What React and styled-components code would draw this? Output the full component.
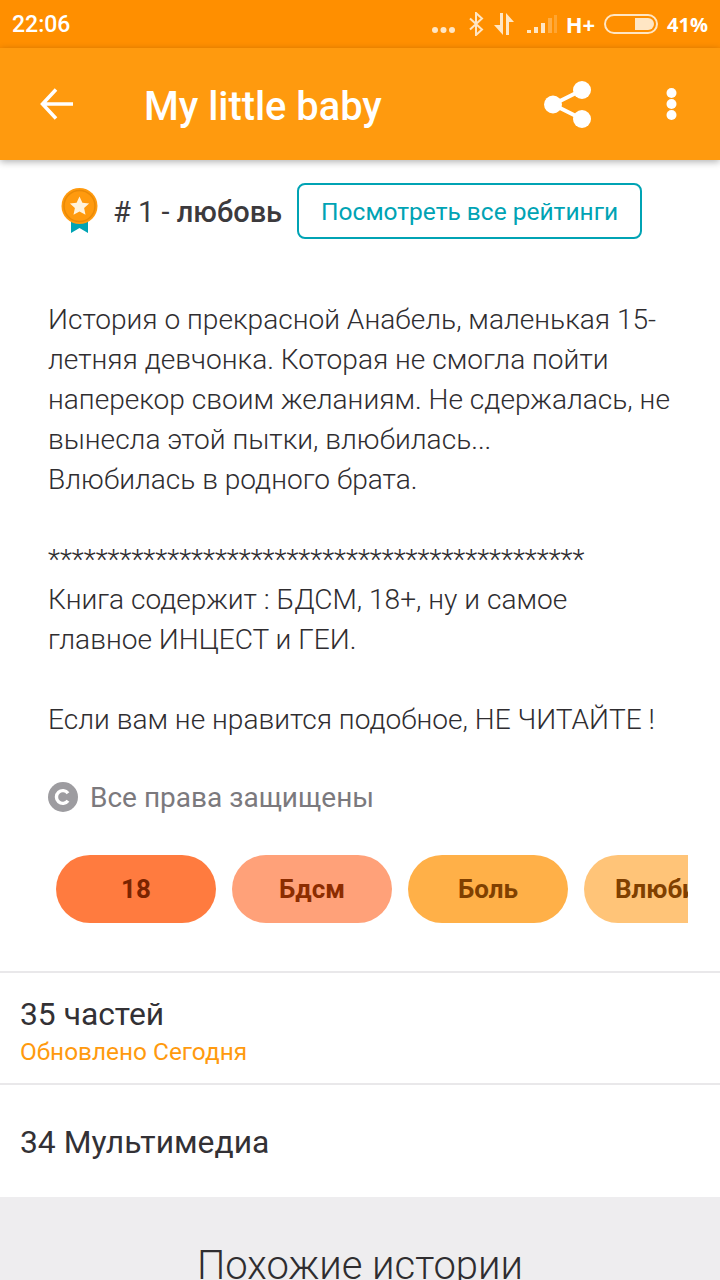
import React from "react";
import styled, { createGlobalStyle } from "styled-components";

const Global = createGlobalStyle`
  html, body { margin: 0; padding: 0; background: #fff; }
  body { font-family: Roboto, "Noto Sans", sans-serif; overflow: hidden; }
`;

const Page = styled.div`
  width: 720px;
  height: 1280px;
  overflow: hidden;
  background: #fff;
`;

const StatusBar = styled.div`
  height: 48px;
  background: #ff8f00;
  display: flex;
  align-items: center;
  padding: 0 12px;
  color: #fff;
`;

const Clock = styled.span`
  font-size: 23px;
  font-weight: 500;
  flex: 1;
`;

const StatusIcons = styled.div`
  display: flex;
  align-items: center;
  gap: 9px;
  color: #ffe6c4;
`;

const IconSlot = styled.span`
  display: flex;
  margin: ${(p) => p.$top || 0}px ${(p) => p.$right || 0}px 0 0;
`;

const NetworkType = styled.span`
  font-size: 22px;
  font-weight: 700;
  color: #fff;
  font-family: "Open Sans", sans-serif;
`;

const Battery = styled.span`
  font-size: 20px;
  font-weight: 700;
  color: #fff;
  font-family: "Open Sans", sans-serif;
`;

const Toolbar = styled.header`
  height: 112px;
  background: #ff9a0e;
  display: flex;
  align-items: center;
  box-shadow: 0 2px 7px rgba(0, 0, 0, 0.3);
  position: relative;
  padding-left: 40px;
  color: #fff;
`;

const Title = styled.h1`
  font-size: 39.8px;
  font-weight: 500;
  margin: 5px 0 0 71px;
  flex: 1;
`;

const ToolbarAction = styled.button`
  background: none;
  border: 0;
  padding: 0;
  display: flex;
  margin-right: ${(p) => p.$gap}px;
`;

const RatingRow = styled.div`
  display: flex;
  align-items: center;
  height: 56px;
  margin-top: 23px;
  padding-left: 61px;
`;

const RatingText = styled.span`
  font-size: 29px;
  font-weight: 400;
  color: #3c3a3d;
  margin: 2px 15px 0 15px;
  white-space: nowrap;

  b {
    font-weight: 500;
  }
`;

const RatingButton = styled.button`
  width: 345px;
  height: 56px;
  flex: none;
  box-sizing: border-box;
  border: 2px solid #00a3b4;
  border-radius: 8px;
  background: #fff;
  color: #00a3b4;
  font: 400 24.5px Roboto, sans-serif;
  padding: 1px 0 0;
`;

const Description = styled.p`
  margin: 61px 0 0;
  padding: 0 40px 0 48px;
  font-size: 28.1px;
  font-weight: 300;
  line-height: 40px;
  color: #2f2d30;
  white-space: pre-line;
`;

const CopyrightRow = styled.div`
  display: flex;
  align-items: center;
  gap: 12px;
  margin: 37px 0 0 48px;
  height: 40px;
  font-size: 28px;
  font-weight: 400;
  color: #7b797d;
`;

const TagScroller = styled.div`
  display: flex;
  gap: 16px;
  width: 632px;
  margin: 38px 0 0 56px;
  overflow: hidden;
`;

const Tag = styled.div`
  flex: none;
  min-width: 160px;
  box-sizing: border-box;
  padding: 0 31px;
  height: 68px;
  border-radius: 34px;
  display: flex;
  align-items: center;
  justify-content: center;
  background: ${(p) => p.$bg};
  color: ${(p) => p.$fg};
  font-size: 26px;
  font-weight: 700;
  white-space: nowrap;
`;

const InfoRow = styled.div`
  height: 112px;
  box-sizing: border-box;
  border-top: 2px solid #e9e8ea;
  padding: ${(p) => p.$pad || 0}px 20px 0;
  display: flex;
  flex-direction: column;
  justify-content: center;
  margin-top: ${(p) => p.$top || 0}px;
`;

const InfoTitle = styled.div`
  font-size: 31.8px;
  font-weight: 400;
  line-height: 40px;
  color: #333135;
`;

const InfoSub = styled.div`
  font-size: 24.4px;
  line-height: 36px;
  color: #ff9a0e;
`;

const Similar = styled.section`
  height: 83px;
  background: #eeedef;
  margin-top: 2px;
  text-align: center;
  padding-top: 45px;
  box-sizing: border-box;
`;

const SimilarTitle = styled.h2`
  margin: 0;
  font-size: 40px;
  font-weight: 300;
  line-height: 48px;
  color: #2f2d30;
`;

const CopyrightIcon = () => (
  <svg width="30" height="30" viewBox="0 0 30 30">
    <circle cx="15" cy="15" r="15" fill="#9d9ca0" />
    <path d="M20 11.2a6.4 6.4 0 1 0 0 7.6" fill="none" stroke="#fff" strokeWidth="3.4" />
  </svg>
);

const Medal = () => (
  <svg width="37" height="46" viewBox="0 0 37 46">
    <path d="M10 28h17v17l-8.500-5-8.500 5z" fill="#00a3b4" />
    <circle cx="18.500" cy="18" r="18" fill="#ff9a0e" />
    <circle cx="18.500" cy="18" r="15.500" fill="none" stroke="#e98a08" strokeWidth="1.500" />
    <path d="M18.500 8.500l2.900 6.200 6.700.8-5 4.600 1.400 6.700-6-3.400-6 3.400 1.400-6.700-5-4.600 6.700-.8z" fill="#fff3dd" />
  </svg>
);

const Bluetooth = () => (
  <svg width="16" height="24" viewBox="0 0 16 24" fill="none" stroke="currentColor" strokeWidth="2">
    <path d="M2 6.500l12 11-6 5.500V1l6 5.500-12 11" />
  </svg>
);

const DataArrows = () => (
  <svg width="22" height="24" viewBox="0 0 22 24" fill="currentColor">
    <path d="M7 1h3v22L1 13h6zM13 1l8 9h-5v13h-3z" />
  </svg>
);

const Signal = () => (
  <svg width="30" height="20" viewBox="0 0 30 20" fill="currentColor">
    <rect x="0" y="16" width="4" height="3" />
    <rect x="7" y="13" width="4" height="6" />
    <rect x="14" y="9" width="4" height="10" />
    <rect x="21" y="4" width="4" height="15" opacity=".35" />
    <rect x="27" y="1" width="3" height="18" opacity=".25" />
  </svg>
);

const BatteryIcon = () => (
  <svg width="54" height="20" viewBox="0 0 54 20">
    <rect x="1" y="1" width="52" height="18" rx="9" fill="none" stroke="currentColor" strokeWidth="2" />
    <path d="M31 4h13a6 6 0 0 1 0 12H31z" fill="currentColor" />
  </svg>
);

const Dots = () => (
  <svg width="23" height="8" viewBox="0 0 23 8" fill="currentColor">
    <circle cx="3" cy="4" r="3" />
    <circle cx="11.500" cy="4" r="3" />
    <circle cx="20" cy="4" r="3" />
  </svg>
);

const BackIcon = () => (
  <svg width="33" height="32" viewBox="0 0 33 32" fill="none" stroke="#fff" strokeWidth="3.500">
    <path d="M33 16H3M16 1.500L2.500 16 16 30.500" />
  </svg>
);

const ShareIcon = () => (
  <svg width="47" height="47" viewBox="0 0 47 47" fill="#fff">
    <circle cx="38" cy="9" r="9" />
    <circle cx="9" cy="23.500" r="9" />
    <circle cx="38" cy="38" r="9" />
    <path d="M38 9L9 23.500 38 38" fill="none" stroke="#fff" strokeWidth="4" />
  </svg>
);

const MoreIcon = () => (
  <svg width="11" height="32" viewBox="0 0 11 32" fill="#fff">
    <circle cx="5.500" cy="5" r="5" />
    <circle cx="5.500" cy="16" r="5" />
    <circle cx="5.500" cy="27" r="5" />
  </svg>
);

const tags = [
  { label: "18", bg: "#ff7b3f", fg: "#7a2400" },
  { label: "Бдсм", bg: "#ffa179", fg: "#8c2c00" },
  { label: "Боль", bg: "#ffb048", fg: "#804000" },
  { label: "Влюбилась", bg: "#ffc478", fg: "#804000" },
];

const description = `История о прекрасной Анабель, маленькая 15-
летняя девчонка. Которая не смогла пойти
наперекор своим желаниям. Не сдержалась, не
вынесла этой пытки, влюбилась...
Влюбилась в родного брата.

*********************************************
Книга содержит : БДСМ, 18+, ну и самое
главное ИНЦЕСТ и ГЕИ.

Если вам не нравится подобное, НЕ ЧИТАЙТЕ !`;

export default function App() {
  return (
    <Page>
      <Global />
      <StatusBar>
        <Clock>22:06</Clock>
        <StatusIcons>
          <IconSlot $top={12} $right={4}>
            <Dots />
          </IconSlot>
          <Bluetooth />
          <IconSlot $right={3}>
            <DataArrows />
          </IconSlot>
          <Signal />
          <NetworkType>H+</NetworkType>
          <BatteryIcon />
          <Battery>41%</Battery>
        </StatusIcons>
      </StatusBar>
      <Toolbar>
        <BackIcon />
        <Title>My little baby</Title>
        <ToolbarAction $gap={75}>
          <ShareIcon />
        </ToolbarAction>
        <ToolbarAction $gap={43}>
          <MoreIcon />
        </ToolbarAction>
      </Toolbar>
      <RatingRow>
        <Medal />
        <RatingText>
          # 1 - <b>любовь</b>
        </RatingText>
        <RatingButton>Посмотреть все рейтинги</RatingButton>
      </RatingRow>
      <Description>{description}</Description>
      <CopyrightRow>
        <CopyrightIcon />
        Все права защищены
      </CopyrightRow>
      <TagScroller>
        {tags.map((t) => (
          <Tag key={t.label} $bg={t.bg} $fg={t.fg}>
            {t.label}
          </Tag>
        ))}
      </TagScroller>
      <InfoRow $top={48} $pad={7}>
        <InfoTitle>35 частей</InfoTitle>
        <InfoSub>Обновлено Сегодня</InfoSub>
      </InfoRow>
      <InfoRow $pad={3}>
        <InfoTitle>34 Мультимедиа</InfoTitle>
      </InfoRow>
      <Similar>
        <SimilarTitle>Похожие истории</SimilarTitle>
      </Similar>
    </Page>
  );
}
